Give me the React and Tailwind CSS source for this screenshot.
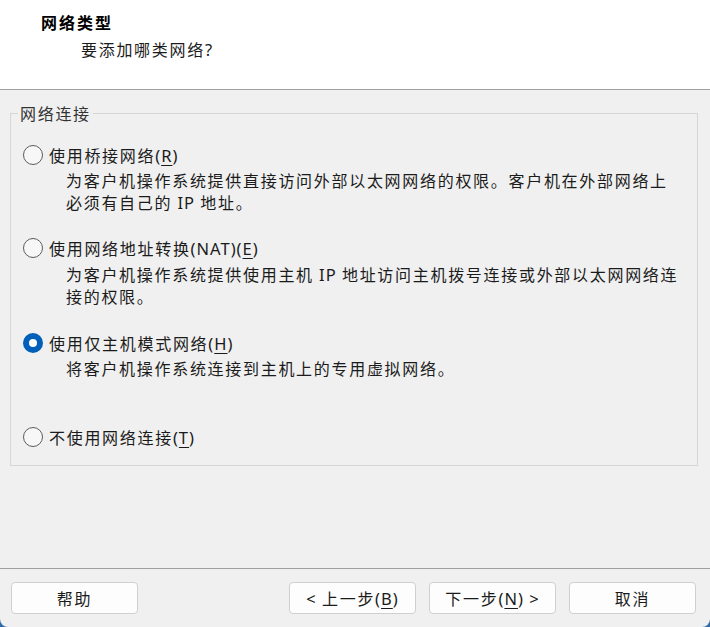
import React from "react";

const font = {
  fontFamily: '"Noto Sans CJK SC", "Noto Sans", sans-serif',
};

// latin runs: no CJK letter spacing, a bit larger like Segoe UI in the dialog
const L = ({ children }) => (
  <span className="font-['Noto_Sans'] text-[16.5px] tracking-[1px] leading-none">{children}</span>
);

const Key = ({ children }) => (
  <span className="underline underline-offset-[3px] decoration-1">{children}</span>
);

const Radio = ({ checked }) =>
  checked ? (
    <span className="w-[20px] h-[20px] rounded-full bg-[#005fb8] flex items-center justify-center shrink-0">
      <span className="w-[8px] h-[8px] rounded-full bg-white" />
    </span>
  ) : (
    <span className="w-[20px] h-[20px] rounded-full border border-[#5c5c5c] bg-[#f7f7f7] shrink-0" />
  );

const Option = ({ checked, label, className = "" }) => (
  <div className={"flex items-center gap-[6px] h-[20px] " + className}>
    <Radio checked={checked} />
    <span className="leading-[20px] whitespace-nowrap">{label}</span>
  </div>
);

const Desc = ({ lines, className = "" }) => (
  <div className={"pl-[43px] leading-[22px] " + className}>
    {lines.map((l, i) => (
      <div key={i} className="whitespace-nowrap h-[22px]">
        {l}
      </div>
    ))}
  </div>
);

const Button = ({ children, className = "" }) => (
  <button
    className={
      "w-[127px] h-[32px] rounded-[4px] border border-[#d0d0d0] bg-[#fdfdfd] text-[16px] tracking-[1.7px] text-[#1b1b1b] flex items-center justify-center " +
      className
    }
  >
    <span className="whitespace-pre">{children}</span>
  </button>
);

export default function App() {
  return (
    <div className="w-[710px] h-[627px] bg-[#2f6cab]" style={font}>
      <div className="h-full flex flex-col bg-[#f0f0f0] rounded-b-[8px] overflow-hidden text-[16px] tracking-[1.7px] text-[#1b1b1b]">
        <div className="h-[90px] bg-white border-b border-[#a0a0a0] pl-[41px] pt-[12px]">
          <div className="font-bold leading-[20px] text-black tracking-[2px]">网络类型</div>
          <div className="ml-[40px] mt-[7px] leading-[20px]">
            要添加哪类网络<L>?</L>
          </div>
        </div>

        <div className="flex-1 px-[10px] pt-[23px]">
          <div className="relative w-[688px] h-[353px] border border-[#d6d6d6] pl-[12px] pt-[31px]">
            <span className="absolute left-[7px] top-[-11px] px-[2px] bg-[#f0f0f0] leading-[20px] text-[#333]">
              网络连接
            </span>

            <Option
              label={
                <>
                  使用桥接网络<L>(<Key>R</Key>)</L>
                </>
              }
            />
            <Desc
              className="mt-[4px]"
              lines={[
                "为客户机操作系统提供直接访问外部以太网网络的权限。客户机在外部网络上",
                <>
                  必须有自己的<L> IP </L>地址。
                </>,
              ]}
            />

            <Option
              className="mt-[25px]"
              label={
                <>
                  使用网络地址转换<L>(NAT)(<Key>E</Key>)</L>
                </>
              }
            />
            <Desc
              className="mt-[5px]"
              lines={[
                <>
                  为客户机操作系统提供使用主机<L> IP </L>地址访问主机拨号连接或外部以太网网络连
                </>,
                "接的权限。",
              ]}
            />

            <Option
              checked
              className="mt-[26px]"
              label={
                <>
                  使用仅主机模式网络<L>(<Key>H</Key>)</L>
                </>
              }
            />
            <Desc
              className="mt-[4px]"
              lines={["将客户机操作系统连接到主机上的专用虚拟网络。"]}
            />

            <Option
              className="mt-[48px]"
              label={
                <>
                  不使用网络连接<L>(<Key>T</Key>)</L>
                </>
              }
            />
          </div>
        </div>

        <div className="h-[59px] border-t border-[#a0a0a0] flex items-start pt-[13px] pl-[11px] pr-[14px]">
          <Button>帮助</Button>
          <Button className="ml-auto">
            <L>{"< "}</L>上一步<L>(<Key>B</Key>)</L>
          </Button>
          <Button className="ml-[13px]">
            下一步<L>(<Key>N</Key>){" >"}</L>
          </Button>
          <Button className="ml-[13px]">取消</Button>
        </div>
      </div>
    </div>
  );
}
